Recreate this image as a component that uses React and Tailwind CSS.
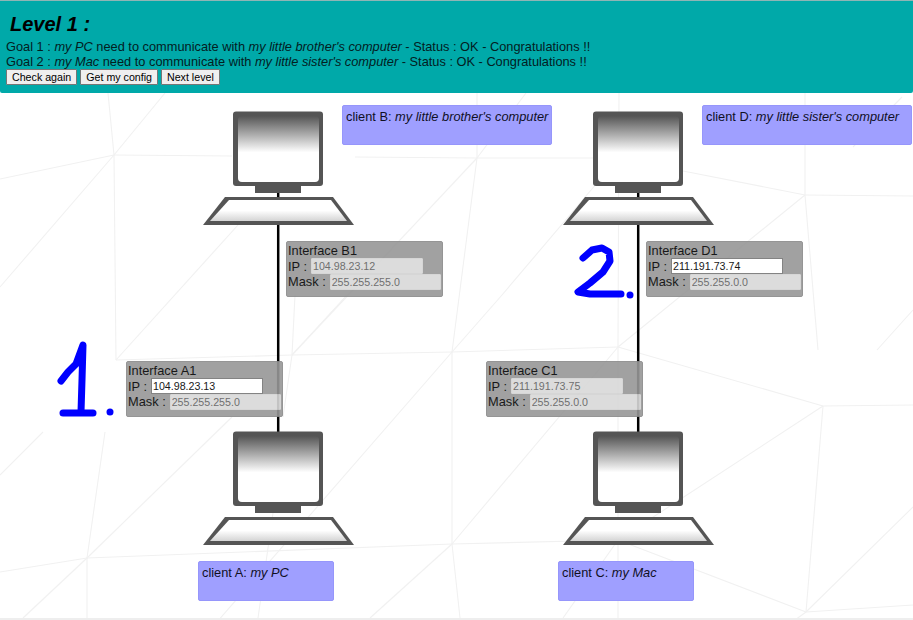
// App.jsx
import React from 'react';

const meshLines = [
  [114, 155, 0, 179], [114, 155, 165, 93], [114, 155, 108, 93], [114, 155, 232, 156], [114, 155, 116, 360], [114, 155, 0, 287],
  [116, 360, 238, 225], [116, 360, 292, 355], [292, 355, 452, 352], [452, 352, 618, 347],
  [292, 355, 295, 295], [292, 355, 347, 295], [292, 355, 283, 417],
  [477, 158, 355, 157], [477, 158, 593, 158], [477, 158, 477, 93], [477, 158, 526, 93], [477, 158, 292, 355], [477, 158, 452, 352],
  [452, 352, 502, 295], [502, 295, 597, 183], [452, 352, 452, 544], [452, 352, 210, 630],
  [452, 544, 87, 558], [452, 544, 618, 540], [452, 544, 618, 347], [452, 544, 370, 618], [452, 544, 460, 618],
  [619, 93, 618, 347], [618, 347, 618, 618], [618, 347, 805, 195], [618, 347, 823, 406],
  [618, 540, 563, 618], [618, 540, 806, 612], [618, 540, 823, 406],
  [805, 195, 805, 93], [805, 195, 683, 171], [805, 195, 913, 196], [805, 195, 818, 350], [902, 97, 853, 147], [913, 310, 877, 350],
  [823, 406, 913, 405], [823, 406, 806, 612], [806, 612, 913, 605], [806, 612, 913, 507], [806, 612, 795, 620],
  [87, 558, 105, 432], [87, 558, 0, 572], [87, 558, 23, 618], [87, 558, 87, 618], [87, 558, 232, 417], [0, 475, 43, 432],
  [273, 513, 258, 618],
];

const clients = [
  { key: 'B', who: "my little brother's computer", box: 'left-[342px] top-[105px] w-[210px]' },
  { key: 'D', who: "my little sister's computer", box: 'left-[702px] top-[105px] w-[210px]' },
  { key: 'A', who: 'my PC', box: 'left-[198px] top-[561px] w-[136px]' },
  { key: 'C', who: 'my Mac', box: 'left-[558px] top-[561px] w-[136px]' },
];

const interfaces = [
  { name: 'Interface B1', ip: '104.98.23.12', mask: '255.255.255.0', edit: false, box: 'left-[286px] top-[241px]' },
  { name: 'Interface D1', ip: '211.191.73.74', mask: '255.255.0.0', edit: true, box: 'left-[646px] top-[241px]' },
  { name: 'Interface A1', ip: '104.98.23.13', mask: '255.255.255.0', edit: true, box: 'left-[126px] top-[361px]' },
  { name: 'Interface C1', ip: '211.191.73.75', mask: '255.255.0.0', edit: false, box: 'left-[486px] top-[361px]' },
];

const computers = [
  'left-[203px] top-[110px]',
  'left-[563px] top-[110px]',
  'left-[203px] top-[430px]',
  'left-[563px] top-[430px]',
];

const Computer = ({ pos, id }) => (
  <svg className={`absolute ${pos}`} width="152" height="116" viewBox="0 0 152 116">
    <defs>
      <linearGradient id={`screen${id}`} x1="0" y1="0" x2="0" y2="1">
        <stop offset="0" stopColor="#555555" />
        <stop offset="0.55" stopColor="#ffffff" />
        <stop offset="1" stopColor="#ffffff" />
      </linearGradient>
      <linearGradient id={`keys${id}`} x1="0" y1="0" x2="0" y2="1">
        <stop offset="0" stopColor="#ffffff" />
        <stop offset="0.5" stopColor="#ffffff" />
        <stop offset="1" stopColor="#d4d4d4" />
      </linearGradient>
    </defs>
    <rect x="52" y="76" width="46" height="7" fill="#555555" />
    <rect x="30" y="1.500" width="90" height="74.500" rx="3" fill="#555555" />
    <rect x="35" y="6" width="81" height="66" rx="4" fill={`url(#screen${id})`} />
    <polygon points="22,87 130,87 151,115 0,115" fill="#555555" />
    <polygon points="26,90 128,90 144,111 7,111" fill={`url(#keys${id})`} />
  </svg>
);

const Field = ({ label, value, edit, width, raise }) => (
  <div className="flex items-center h-[16px]">
    <span className={raise ? 'mr-[4px] -mt-[2px]' : 'mr-[4px]'}>{label}</span>
    <input
      readOnly
      value={value}
      className={
        edit
          ? `h-[16px] ${width} px-[1px] text-[10.670px] text-black bg-white border border-[#767676] outline-none`
          : `h-[16px] ${width} px-[1px] text-[10.670px] text-[#5f5f5f] bg-[#d9d9d9] border border-[#d2d2d2] rounded-[1px] outline-none`
      }
    />
  </div>
);

export default function App() {
  return (
    <div className="relative w-[913px] h-[620px] overflow-hidden bg-white text-black font-['Liberation_Sans',Arial,sans-serif] text-[12.800px] leading-[15px]">
      <svg className="absolute left-0 top-0" width="913" height="620" viewBox="0 0 913 620">
        {meshLines.map(([x1, y1, x2, y2], i) => (
          <line key={i} x1={x1} y1={y1} x2={x2} y2={y2} stroke="#f1f1f1" strokeWidth="1.100" />
        ))}
      </svg>
      <div className="absolute left-0 right-0 bottom-0 h-[2px] bg-[#eeeeee]" />

      <header className="relative h-[93px] bg-[#00a9a9] border-t border-[#8fb5b5] rounded-b-[2px] pl-[6px] pt-[12px] text-[#03201f]">
        <h1 className="ml-[4px] mb-[3px] text-[20px] leading-[23px] font-bold italic text-black">Level 1 :</h1>
        <div>
          Goal 1 : <i>my PC</i> need to communicate with <i>my little brother's computer</i> - Status : OK - Congratulations !!
        </div>
        <div>
          Goal 2 : <i>my Mac</i> need to communicate with <i>my little sister's computer</i> - Status : OK - Congratulations !!
        </div>
        <div className="flex gap-[3px]">
          {['Check again', 'Get my config', 'Next level'].map((label) => (
            <button key={label} className="h-[16px] px-[5px] bg-[#efefef] border border-[#767676] rounded-[1px] text-[10.670px] leading-[12px] text-black">
              {label}
            </button>
          ))}
        </div>
      </header>

      {/* links between the interfaces */}
      <svg className="absolute left-0 top-0" width="913" height="620" viewBox="0 0 913 620">
        <line x1="278.200" y1="190" x2="278.200" y2="433" stroke="#000000" strokeWidth="2.500" />
        <line x1="638.200" y1="190" x2="638.200" y2="433" stroke="#000000" strokeWidth="2.500" />
      </svg>

      {computers.map((pos, i) => (
        <Computer key={pos} pos={pos} id={i} />
      ))}

      {clients.map((c) => (
        <div key={c.key} className={`absolute ${c.box} h-[40px] pl-[3px] pt-[3px] bg-[#9f9fff] border border-[#9696fb] rounded-[2px] text-[#10101f] whitespace-nowrap`}>
          client {c.key}: <i>{c.who}</i>
        </div>
      ))}

      {interfaces.map((f) => (
        <div key={f.name} className={`absolute ${f.box} w-[157px] h-[56px] pl-[1px] pt-[1px] bg-[#979797] opacity-90 border border-[#8a8a8a] rounded-[2px] text-black whitespace-nowrap`}>
          <div className="h-[15px]">{f.name}</div>
          <Field label="IP :" value={f.ip} edit={f.edit} width="w-[112px]" />
          <Field label="Mask :" value={f.mask} edit={false} width="w-[111px]" raise />
        </div>
      ))}

      {/* hand written marks */}
      <svg className="absolute left-0 top-0 pointer-events-none" width="913" height="620" viewBox="0 0 913 620">
        <g fill="none" stroke="#0000ff" strokeWidth="7" strokeLinecap="round" strokeLinejoin="round">
          <path d="M61 381 L68 372 L76 364 L83 345 L82 380 L81 412" />
          <path d="M63 413 L93 413" />
          <path d="M583 258 L592 250 L602 248 L609 252 L610 261 L603 272 L590 283 L578 292 L590 294 L621 294" />
        </g>
        <circle cx="110" cy="412" r="3.500" fill="#0000ff" />
        <circle cx="630" cy="295" r="3.500" fill="#0000ff" />
      </svg>
    </div>
  );
}
